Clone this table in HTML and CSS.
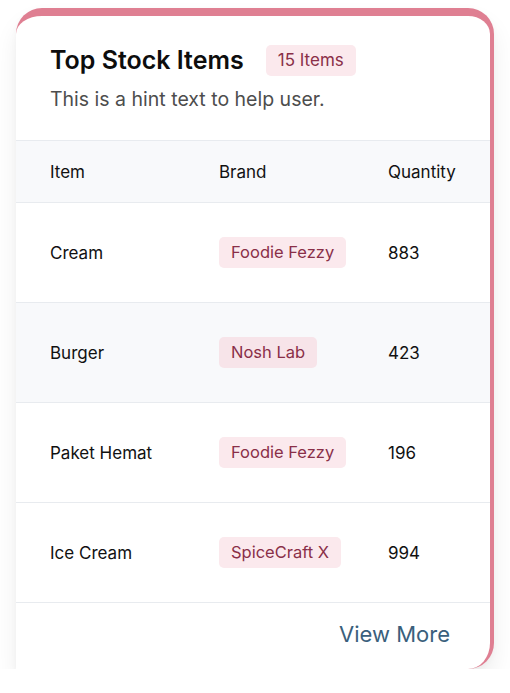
FILE: index.html
```html
<!DOCTYPE html>
<html lang="en">
<head>
<meta charset="utf-8">
<title>Top Stock Items</title>
<link rel="stylesheet" href="styles.css">
</head>
<body>
<div class="card">
  <div class="card-header">
    <div class="title-row">
      <h2 class="title">Top Stock Items</h2>
      <span class="count-badge">15 Items</span>
    </div>
    <p class="hint">This is a hint text to help user.</p>
  </div>
  <div class="table">
    <div class="row head">
      <div class="cell">Item</div>
      <div class="cell">Brand</div>
      <div class="cell">Quantity</div>
    </div>
    <div class="row">
      <div class="cell">Cream</div>
      <div class="cell"><span class="pill">Foodie Fezzy</span></div>
      <div class="cell">883</div>
    </div>
    <div class="row alt">
      <div class="cell">Burger</div>
      <div class="cell"><span class="pill">Nosh Lab</span></div>
      <div class="cell">423</div>
    </div>
    <div class="row">
      <div class="cell">Paket Hemat</div>
      <div class="cell"><span class="pill">Foodie Fezzy</span></div>
      <div class="cell">196</div>
    </div>
    <div class="row">
      <div class="cell">Ice Cream</div>
      <div class="cell"><span class="pill">SpiceCraft X</span></div>
      <div class="cell">994</div>
    </div>
  </div>
  <div class="card-footer">
    <a class="view-more" href="#">View More</a>
  </div>
</div>
</body>
</html>
```

FILE: styles.css
```css
* { box-sizing: border-box; }
html, body { margin: 0; padding: 0; background: #ffffff; }
body {
  font-family: Inter, "Noto Sans", sans-serif;
  color: #111111;
  padding: 8px 16px 0 16px;
}
.card {
  width: 478px;
  background: #ffffff;
  border-top: 8px solid #df7f92;
  border-right: 4px solid #df7f92;
  border-radius: 26px 26px 26px 0;
  box-shadow: 0 14px 24px rgba(0, 0, 0, 0.07), 0 2px 6px rgba(0, 0, 0, 0.03);
  overflow: hidden;
}
.card-header {
  padding: 28px 34px 28px 34px;
  border-bottom: 1px solid #e8ebef;
}
.title-row {
  display: flex;
  align-items: center;
  gap: 22px;
}
.title {
  margin: 0;
  font-size: 25px;
  line-height: 32px;
  font-weight: 600;
  color: #0d0d0d;
}
.count-badge {
  display: inline-block;
  background: #fbe9ed;
  color: #8a2f48;
  font-size: 17px;
  line-height: 31px;
  padding: 0 12px;
  border-radius: 5px;
}
.hint {
  margin: 10px 0 0 0;
  font-size: 19.5px;
  line-height: 26px;
  color: #4d4d4d;
}
.row {
  display: grid;
  grid-template-columns: 169px 169px 1fr;
  align-items: center;
  height: 100px;
  border-bottom: 1px solid #e8ebef;
  font-size: 17px;
}
.row.head {
  height: 62px;
  background: #f8f9fb;
}
.row.alt {
  background: #f8f9fb;
}
.cell {
  padding-left: 34px;
}
.pill {
  display: inline-block;
  background: #fbe9ed;
  color: #8a2f48;
  font-size: 16.5px;
  line-height: 31px;
  padding: 0 12px;
  border-radius: 5px;
}
.row.alt .pill {
  background: #f7e4e9;
}
.card-footer {
  height: 66px;
  display: flex;
  align-items: center;
  justify-content: flex-end;
  padding: 0 40px 5px 0;
}
.view-more {
  font-size: 22px;
  color: #3a5f7c;
  text-decoration: none;
}
```
